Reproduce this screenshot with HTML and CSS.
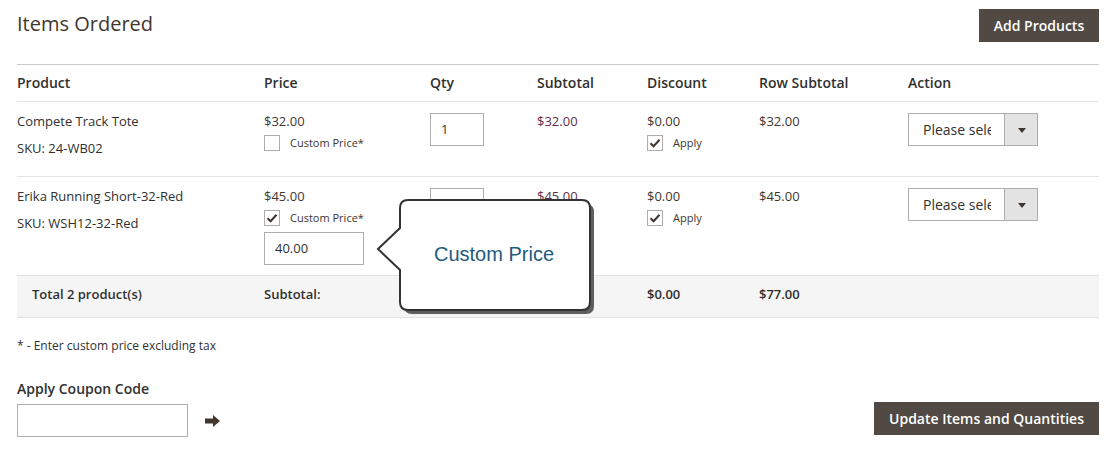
FILE: index.html
```html
<!DOCTYPE html>
<html>
<head>
<meta charset="utf-8">
<link rel="stylesheet" href="styles.css">
</head>
<body>
<div class="page">
  <div class="head">
    <h2 class="title">Items Ordered</h2>
    <button class="btn btn-add">Add Products</button>
  </div>

  <table class="items">
    <colgroup>
      <col style="width:247px"><col style="width:166px"><col style="width:107px"><col style="width:110px"><col style="width:112px"><col style="width:149px"><col style="width:191px">
    </colgroup>
    <thead>
      <tr>
        <th>Product</th><th>Price</th><th>Qty</th><th>Subtotal</th><th>Discount</th><th>Row Subtotal</th><th>Action</th>
      </tr>
    </thead>
    <tbody>
      <tr class="item">
        <td><div class="pname">Compete Track Tote</div><div class="sku">SKU: 24-WB02</div></td>
        <td>
          <div class="price">$32.00</div>
          <label class="chk-line"><span class="chk"></span><span class="chk-label">Custom Price*</span></label>
        </td>
        <td><div class="qty">1</div></td>
        <td><div class="price sub">$32.00</div></td>
        <td>
          <div class="price">$0.00</div>
          <label class="chk-line"><span class="chk on"><svg viewBox="0 0 16 16" width="16" height="16"><path d="M3.5 8.2 L6.6 11.2 L12.5 4.8" fill="none" stroke="#41362f" stroke-width="2"/></svg></span><span class="chk-label">Apply</span></label>
        </td>
        <td><div class="price">$32.00</div></td>
        <td><div class="select"><span class="sel-text">Please select</span><span class="sel-arrow"></span></div></td>
      </tr>
      <tr class="item">
        <td><div class="pname">Erika Running Short-32-Red</div><div class="sku">SKU: WSH12-32-Red</div></td>
        <td>
          <div class="price">$45.00</div>
          <label class="chk-line"><span class="chk on"><svg viewBox="0 0 16 16" width="16" height="16"><path d="M3.5 8.2 L6.6 11.2 L12.5 4.8" fill="none" stroke="#41362f" stroke-width="2"/></svg></span><span class="chk-label">Custom Price*</span></label>
          <div class="cprice">40.00</div>
        </td>
        <td><div class="qty">1</div></td>
        <td><div class="price sub">$45.00</div></td>
        <td>
          <div class="price">$0.00</div>
          <label class="chk-line"><span class="chk on"><svg viewBox="0 0 16 16" width="16" height="16"><path d="M3.5 8.2 L6.6 11.2 L12.5 4.8" fill="none" stroke="#41362f" stroke-width="2"/></svg></span><span class="chk-label">Apply</span></label>
        </td>
        <td><div class="price">$45.00</div></td>
        <td><div class="select"><span class="sel-text">Please select</span><span class="sel-arrow"></span></div></td>
      </tr>
    </tbody>
    <tfoot>
      <tr>
        <td class="tot-first">Total 2 product(s)</td>
        <td>Subtotal:</td>
        <td></td>
        <td>$77.00</td>
        <td>$0.00</td>
        <td>$77.00</td>
        <td></td>
      </tr>
    </tfoot>
  </table>

  <p class="note">* - Enter custom price excluding tax</p>

  <div class="coupon-title">Apply Coupon Code</div>
  <div class="bottom">
    <div class="coupon">
      <div class="coupon-input"></div>
      <svg class="arrow" viewBox="0 0 16 14" width="16" height="14"><path d="M0 4.5 H8 V1 L15 7 L8 13 V9.5 H0 Z" fill="#41362f"/></svg>
    </div>
    <button class="btn btn-update">Update Items and Quantities</button>
  </div>

  <svg class="callout" width="230" height="124" viewBox="0 0 230 124">
    <path d="M30 11 Q30 3 38 3 H212 Q220 3 220 11 V105 Q220 113 212 113 H38 Q30 113 30 105 V73 L8 52 L30 31 Z" fill="#5f5f5f" transform="translate(4,4)"/>
    <path d="M30 11 Q30 3 38 3 H212 Q220 3 220 11 V105 Q220 113 212 113 H38 Q30 113 30 105 V73 L8 52 L30 31 Z" fill="#fff" stroke="#333" stroke-width="2"/>
    <text x="124" y="64" text-anchor="middle" class="callout-text">Custom Price</text>
  </svg>
</div>
</body>
</html>
```

FILE: styles.css
```css
* { box-sizing: border-box; }
html, body { margin: 0; padding: 0; background: #fff; }
body {
  font-family: "Open Sans", "Liberation Sans", sans-serif;
  color: #303030;
  font-size: 13px;
}
.page {
  position: relative;
  padding: 9px 10px 0 17px;
  width: 1109px;
}
.head {
  display: flex;
  justify-content: space-between;
  align-items: flex-start;
  height: 55px;
}
.title {
  margin: 1px 0 0;
  font-size: 20px;
  font-weight: 400;
  color: #41362f;
  line-height: 28px;
}
.btn {
  background: #514943;
  color: #fff;
  border: 0;
  font-family: "Open Sans", "Liberation Sans", sans-serif;
  font-size: 14px;
  font-weight: 600;
  height: 33px;
  padding: 0 15px;
  cursor: pointer;
}
.btn-add { width: 120px; padding: 0; }
.items {
  width: 1082px;
  border-collapse: collapse;
  table-layout: fixed;
}
.items th {
  text-align: left;
  font-size: 14px;
  font-weight: 600;
  color: #303030;
  border-top: 1px solid #cccccc;
  border-bottom: 1px solid #e3e3e3;
  height: 37px;
  padding: 0;
  line-height: 18px;
}
.items tbody td {
  vertical-align: top;
  padding: 10px 0 10px;
  height: 75px;
  border-bottom: 1px solid #e3e3e3;
  line-height: 18px;
}
.pname { font-size: 13px; }
.sku { margin-top: 9px; font-size: 13px; }
.price { font-size: 13px; color: #41362f; }
.price.sub { color: #5c2e45; }
.chk-line {
  display: flex;
  align-items: center;
  margin-top: 5px;
  height: 16px;
}
.chk {
  width: 16px; height: 16px;
  border: 1px solid #adadad;
  background: #fff;
  display: inline-block;
  position: relative;
}
.chk svg { position: absolute; left: -1px; top: -1px; }
.chk-label { font-size: 11px; margin-left: 10px; color: #41362f; }
.cprice {
  margin-top: 6px;
  width: 100px;
  height: 33px;
  border: 1px solid #adadad;
  padding: 0 10px;
  line-height: 31px;
  font-size: 13px;
}
.qty {
  margin-top: 1px;
  width: 54px;
  height: 33px;
  border: 1px solid #adadad;
  padding: 0 10px;
  line-height: 31px;
  color: #303030;
  font-size: 13px;
}
.select {
  margin-top: 1px;
  width: 130px;
  height: 33px;
  border: 1px solid #adadad;
  display: flex;
}
.sel-text {
  width: 95px;
  padding-left: 14px;
  overflow: hidden;
  white-space: nowrap;
  line-height: 31px;
  font-size: 14px;
  color: #303030;
  clip-path: inset(0 13px 0 0);
}
.sel-arrow {
  flex: 1;
  background: #e3e3e3;
  border-left: 1px solid #adadad;
  position: relative;
}
.sel-arrow::after {
  content: "";
  position: absolute;
  left: 13px;
  top: 14px;
  border-left: 4px solid transparent;
  border-right: 4px solid transparent;
  border-top: 5px solid #41362f;
}
.items tfoot td {
  background: #f5f5f5;
  font-weight: 600;
  font-size: 13px;
  height: 42px;
  padding: 9px 0 0;
  vertical-align: top;
  line-height: 18px;
  border-bottom: 1px solid #e3e3e3;
}
.items tfoot td.tot-first { padding-left: 15px; }
.note {
  margin: 18px 0 0;
  font-size: 12px;
  line-height: 20px;
}
.coupon-title {
  margin-top: 23px;
  font-size: 14px;
  font-weight: 600;
  line-height: 20px;
}
.bottom {
  display: flex;
  justify-content: space-between;
  align-items: flex-start;
  width: 1082px;
  margin-top: 3px;
}
.coupon { display: flex; align-items: center; margin-top: 2px; }
.coupon-input {
  width: 171px;
  height: 33px;
  border: 1px solid #adadad;
  background: #fff;
}
.arrow { margin-left: 17px; }
.btn-update { width: 225px; padding: 0; }
.callout {
  position: absolute;
  left: 370px;
  top: 197px;
}
.callout-text {
  font-family: "Liberation Sans", Arial, sans-serif;
  font-size: 20px;
  fill: #1e5a80;
}
```
